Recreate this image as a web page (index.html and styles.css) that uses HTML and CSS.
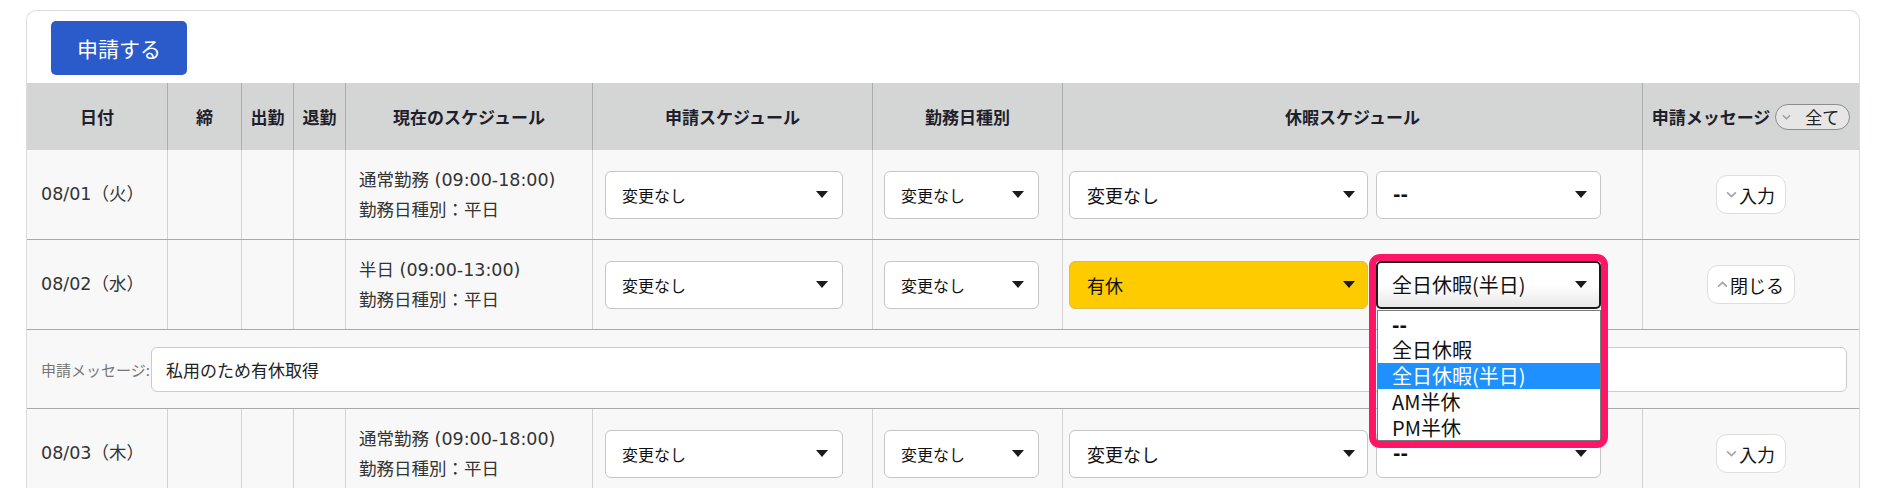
FILE: index.html
```html
<!DOCTYPE html>
<html lang="ja">
<head>
<meta charset="utf-8">
<title>申請</title>
<link rel="stylesheet" href="styles.css">
</head>
<body>
<div class="card">
  <div class="toolbar"><button class="primary">申請する</button></div>

  <div class="grid head">
    <div class="th">日付</div>
    <div class="th">締</div>
    <div class="th">出勤</div>
    <div class="th">退勤</div>
    <div class="th">現在のスケジュール</div>
    <div class="th">申請スケジュール</div>
    <div class="th">勤務日種別</div>
    <div class="th">休暇スケジュール</div>
    <div class="th msg-th">申請メッセージ<span class="pill"><svg class="chev" viewBox="0 0 10 6"><path d="M1 1l4 4 4-4" fill="none" stroke="#9a9a9a" stroke-width="1.4"/></svg><span>全て</span></span></div>
  </div>

  <div class="grid row">
    <div class="td date">08/01（火）</div>
    <div class="td"></div>
    <div class="td"></div>
    <div class="td"></div>
    <div class="td sched"><div>通常勤務 (09:00-18:00)</div><div>勤務日種別：平日</div></div>
    <div class="td apply-cell"><div class="select apply">変更なし<svg class="caret" viewBox="0 0 12 7"><path d="M0 0h12L6 7z"/></svg></div></div>
    <div class="td kind-cell"><div class="select kind">変更なし<svg class="caret" viewBox="0 0 12 7"><path d="M0 0h12L6 7z"/></svg></div></div>
    <div class="td vac-cell">
      <div class="select vac">変更なし<svg class="caret" viewBox="0 0 12 7"><path d="M0 0h12L6 7z"/></svg></div>
      <div class="select vac-sub"><span class="dash">--</span><svg class="caret" viewBox="0 0 12 7"><path d="M0 0h12L6 7z"/></svg></div>
    </div>
    <div class="td msg-cell"><button class="toggle"><svg class="chev" viewBox="0 0 10 6"><path d="M1 1l4 4 4-4" fill="none" stroke="#a5a5a5" stroke-width="1.5"/></svg>入力</button></div>
  </div>

  <div class="grid row">
    <div class="td date">08/02（水）</div>
    <div class="td"></div>
    <div class="td"></div>
    <div class="td"></div>
    <div class="td sched"><div>半日 (09:00-13:00)</div><div>勤務日種別：平日</div></div>
    <div class="td apply-cell"><div class="select apply">変更なし<svg class="caret" viewBox="0 0 12 7"><path d="M0 0h12L6 7z"/></svg></div></div>
    <div class="td kind-cell"><div class="select kind">変更なし<svg class="caret" viewBox="0 0 12 7"><path d="M0 0h12L6 7z"/></svg></div></div>
    <div class="td vac-cell">
      <div class="select vac paid">有休<svg class="caret" viewBox="0 0 12 7"><path d="M0 0h12L6 7z"/></svg></div>
      <div class="open-wrap">
        <div class="select vac-sub focused">全日休暇(半日)<svg class="caret" viewBox="0 0 12 7"><path d="M0 0h12L6 7z"/></svg></div>
        <ul class="dropdown">
          <li><span class="dash">--</span></li>
          <li>全日休暇</li>
          <li class="selected">全日休暇(半日)</li>
          <li>AM半休</li>
          <li>PM半休</li>
        </ul>
        <div class="highlight"></div>
      </div>
    </div>
    <div class="td msg-cell"><button class="toggle close"><svg class="chev" viewBox="0 0 10 6"><path d="M1 5l4-4 4 4" fill="none" stroke="#a5a5a5" stroke-width="1.5"/></svg>閉じる</button></div>
  </div>

  <div class="msg-row">
    <div class="msg-label">申請メッセージ:</div>
    <div class="msg-input">私用のため有休取得</div>
  </div>

  <div class="grid row">
    <div class="td date">08/03（木）</div>
    <div class="td"></div>
    <div class="td"></div>
    <div class="td"></div>
    <div class="td sched"><div>通常勤務 (09:00-18:00)</div><div>勤務日種別：平日</div></div>
    <div class="td apply-cell"><div class="select apply">変更なし<svg class="caret" viewBox="0 0 12 7"><path d="M0 0h12L6 7z"/></svg></div></div>
    <div class="td kind-cell"><div class="select kind">変更なし<svg class="caret" viewBox="0 0 12 7"><path d="M0 0h12L6 7z"/></svg></div></div>
    <div class="td vac-cell">
      <div class="select vac">変更なし<svg class="caret" viewBox="0 0 12 7"><path d="M0 0h12L6 7z"/></svg></div>
      <div class="select vac-sub"><span class="dash">--</span><svg class="caret" viewBox="0 0 12 7"><path d="M0 0h12L6 7z"/></svg></div>
    </div>
    <div class="td msg-cell"><button class="toggle"><svg class="chev" viewBox="0 0 10 6"><path d="M1 1l4 4 4-4" fill="none" stroke="#a5a5a5" stroke-width="1.5"/></svg>入力</button></div>
  </div>
</div>
</body>
</html>
```

FILE: styles.css
```css
* { box-sizing: border-box; }

body {
  margin: 0;
  background: #ffffff;
  font-family: "Noto Sans CJK JP", "Noto Sans", sans-serif;
  color: #222;
}

.card {
  margin: 10px 0 0 26px;
  width: 1834px;
  border: 1px solid #dcdcdc;
  border-bottom: none;
  border-radius: 10px 10px 0 0;
  background: #fff;
}

.toolbar {
  padding: 10px 0 8px 24px;
}

.primary {
  display: block;
  width: 136px;
  height: 54px;
  padding: 0;
  border: none;
  border-radius: 5px;
  background: #2b5bcb;
  color: #fff;
  font-family: "Noto Sans CJK JP", sans-serif;
  font-size: 21px;
  line-height: 54px;
}

.grid {
  display: grid;
  grid-template-columns: 140px 74px 52px 52px 247px 280px 190px 580px 217px;
}

.head {
  height: 67px;
  background: #d4d5d5;
}

.th {
  display: flex;
  align-items: center;
  justify-content: center;
  border-left: 1px solid #adadad;
  font-size: 17px;
  font-weight: 700;
  color: #1f1f2b;
  line-height: 1;
}

.th:first-child { border-left: none; }

.msg-th { gap: 5px; }

.pill {
  display: inline-flex;
  align-items: center;
  height: 26px;
  padding: 0 10px 0 6px;
  border: 1px solid #8c8c8c;
  border-radius: 13px;
  background: #e6e6e6;
  font-weight: 400;
  font-size: 17px;
  color: #222;
  gap: 14px;
}

.pill .chev { width: 9px; height: 6px; }

.row {
  height: 90px;
  background: #f8f8f8;
  border-bottom: 1px solid #a9a9a9;
}

.td {
  display: flex;
  align-items: center;
  border-left: 1px solid #d2d2d2;
  font-size: 17px;
  color: #333;
  line-height: 1.2;
}

.td:first-child { border-left: none; }

.date {
  padding-left: 14px;
  font-family: "DejaVu Sans", "Noto Sans CJK JP", sans-serif;
  font-size: 17.5px;
}

.sched {
  flex-direction: column;
  align-items: flex-start;
  justify-content: center;
  padding-left: 13px;
  line-height: 30px;
  font-family: "DejaVu Sans", "Noto Sans CJK JP", sans-serif;
  font-size: 17.5px;
}

.apply-cell { padding-left: 12px; }
.kind-cell { padding-left: 11px; }
.vac-cell { padding-left: 6px; gap: 8px; }
.msg-cell { justify-content: center; }

.select {
  display: flex;
  align-items: center;
  justify-content: space-between;
  height: 48px;
  padding: 0 14px 0 16px;
  border: 1px solid #c6c6c6;
  border-radius: 6px;
  background: #fff;
  font-size: 16px;
  color: #111;
  line-height: 1;
}

.apply { width: 238px; }
.kind { width: 155px; }

.vac {
  width: 299px;
  font-size: 18px;
  padding: 0 12px 0 17px;
}

.vac-sub {
  width: 225px;
  font-size: 20px;
  padding: 0 13px 0 16px;
}

.dash {
  font-family: "DejaVu Sans", sans-serif;
  font-weight: 700;
  font-size: 18px;
}

.paid {
  background: #fdcb00;
  border-color: #d6bd55;
}

.caret {
  width: 12px;
  height: 7px;
  flex: none;
  fill: #1b1b1b;
}

.open-wrap {
  position: relative;
  width: 225px;
  height: 48px;
}

.focused {
  border: 2px solid #1a1a1a;
  border-radius: 5px;
  padding-left: 14px;
  padding-right: 12px;
  background: linear-gradient(#ffffff 50%, #e8e8e8);
}

.dropdown {
  position: absolute;
  top: 49px;
  left: 1px;
  width: 224px;
  height: 131px;
  margin: 0;
  padding: 0;
  list-style: none;
  background: #fff;
  border: 1px solid #7a7a7a;
  z-index: 2;
}

.dropdown li {
  height: 26px;
  line-height: 26px;
  padding-left: 14px;
  font-size: 20px;
  color: #111;
}

.dropdown li.selected {
  background: #1e90ff;
  color: #fff;
}

.highlight {
  position: absolute;
  top: -7px;
  left: -7px;
  width: 239px;
  height: 194px;
  border: 7px solid #ff1565;
  border-radius: 11px;
  z-index: 3;
  pointer-events: none;
}

.toggle {
  display: inline-flex;
  align-items: center;
  height: 39px;
  padding: 0 10px 0 9px;
  border: 1px solid #dedede;
  border-radius: 11px;
  background: #fff;
  font-family: "Noto Sans CJK JP", sans-serif;
  font-size: 18px;
  color: #111;
  gap: 2px;
}

.toggle .chev { width: 11px; height: 7px; }

.close { padding: 0 10px 0 9px; }

.msg-row {
  display: flex;
  align-items: center;
  height: 79px;
  padding: 0 12px 0 14px;
  background: #f8f8f8;
  border-bottom: 1px solid #a9a9a9;
}

.msg-label {
  width: 110px;
  flex: none;
  font-size: 15px;
  color: #777;
}

.msg-input {
  flex: 1;
  display: flex;
  align-items: center;
  height: 45px;
  padding-left: 14px;
  border: 1px solid #cbcbcb;
  border-radius: 6px;
  background: #fff;
  font-size: 17px;
  color: #222;
}
```
